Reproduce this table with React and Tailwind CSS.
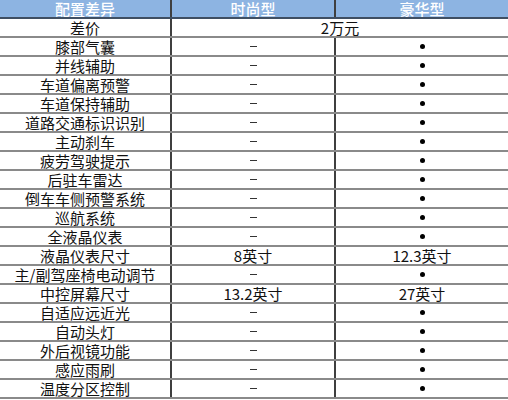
const rows = [
  ['膝部气囊', '–', '•'],
  ['并线辅助', '–', '•'],
  ['车道偏离预警', '–', '•'],
  ['车道保持辅助', '–', '•'],
  ['道路交通标识识别', '–', '•'],
  ['主动刹车', '–', '•'],
  ['疲劳驾驶提示', '–', '•'],
  ['后驻车雷达', '–', '•'],
  ['倒车车侧预警系统', '–', '•'],
  ['巡航系统', '–', '•'],
  ['全液晶仪表', '–', '•'],
  ['液晶仪表尺寸', '8英寸', '12.3英寸'],
  ['主/副驾座椅电动调节', '–', '•'],
  ['中控屏幕尺寸', '13.2英寸', '27英寸'],
  ['自适应远近光', '–', '•'],
  ['自动头灯', '–', '•'],
  ['外后视镜功能', '–', '•'],
  ['感应雨刷', '–', '•'],
  ['温度分区控制', '–', '•'],
];

const font = { fontFamily: '"Noto Sans CJK SC", "Liberation Serif", serif' };

const Cell = ({ children, last }) => (
  <div
    className={`flex items-center justify-center leading-[17px] whitespace-nowrap ${
      last ? '' : 'border-r-2 border-[#3f3f3f]'
    }`}
  >
    {children}
  </div>
);

export default function App() {
  return (
    <div
      className="w-[508px] h-[400px] bg-white text-[15px] text-[#111] overflow-hidden"
      style={font}
    >
      <div className="grid grid-cols-[172px_164px_172px] h-[19px] bg-[#8db4e2] text-white font-medium border-b-2 border-[#3f4f63]">
        <Cell>配置差异</Cell>
        <Cell>时尚型</Cell>
        <Cell last>豪华型</Cell>
      </div>
      <div className="grid grid-cols-[172px_336px] h-[19px] border-b-2 border-[#8a8a8a]">
        <Cell>差价</Cell>
        <Cell last>2万元</Cell>
      </div>
      {rows.map((r) => (
        <div
          key={r[0]}
          className="grid grid-cols-[172px_164px_172px] h-[19px] border-b-2 border-[#8a8a8a]"
        >
          <Cell>{r[0]}</Cell>
          <Cell>
            {r[1] === '–' ? <span className="block w-[7px] h-px bg-[#333]" /> : r[1]}
          </Cell>
          <Cell last>
            {r[2] === '•' ? <span className="block w-[5px] h-[5px] rounded-full bg-black" /> : r[2]}
          </Cell>
        </div>
      ))}
    </div>
  );
}
